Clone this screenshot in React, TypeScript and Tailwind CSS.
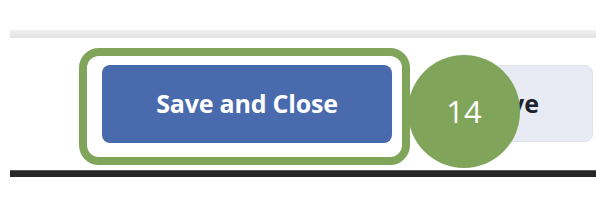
const font = { fontFamily: '"Open Sans", "Liberation Sans", sans-serif' };

export default function App() {
  return (
    <div className="relative w-[596px] h-[208px] bg-white overflow-hidden" style={font}>
      <div className="pt-[30px] pl-[10px]">
        <div className="h-[8px] bg-gradient-to-b from-[#f0f0f0] to-[#e2e2e2]" />
      </div>

      <div className="flex items-start mt-[27px] pl-[102px]">
        <div className="relative">
          <div className="absolute -left-[23px] -top-[17px] -right-[18px] -bottom-[22px] rounded-[20px] border-[8px] border-[#80a55a]" />
          <button className="w-[290px] h-[78px] rounded-[8px] bg-[#4a6aae] text-white text-[25px] font-bold tracking-[-0.2px]">
            Save and Close
          </button>
        </div>
        <button className="ml-[35px] w-[166px] h-[77px] rounded-[8px] bg-[#e8ebf3] border border-[#e0e3ec] text-[#1e222b] text-[25px] font-bold">
          Save
        </button>
      </div>

      <div className="mt-[27px] ml-[10px] h-[7px] bg-[#262626] border-t border-[#5a5a5a]" />

      <div className="absolute left-[408px] top-[55px] w-[112px] h-[113px] rounded-full bg-[#80a55a] flex items-center justify-center text-white text-[31px]">
        14
      </div>
    </div>
  );
}
